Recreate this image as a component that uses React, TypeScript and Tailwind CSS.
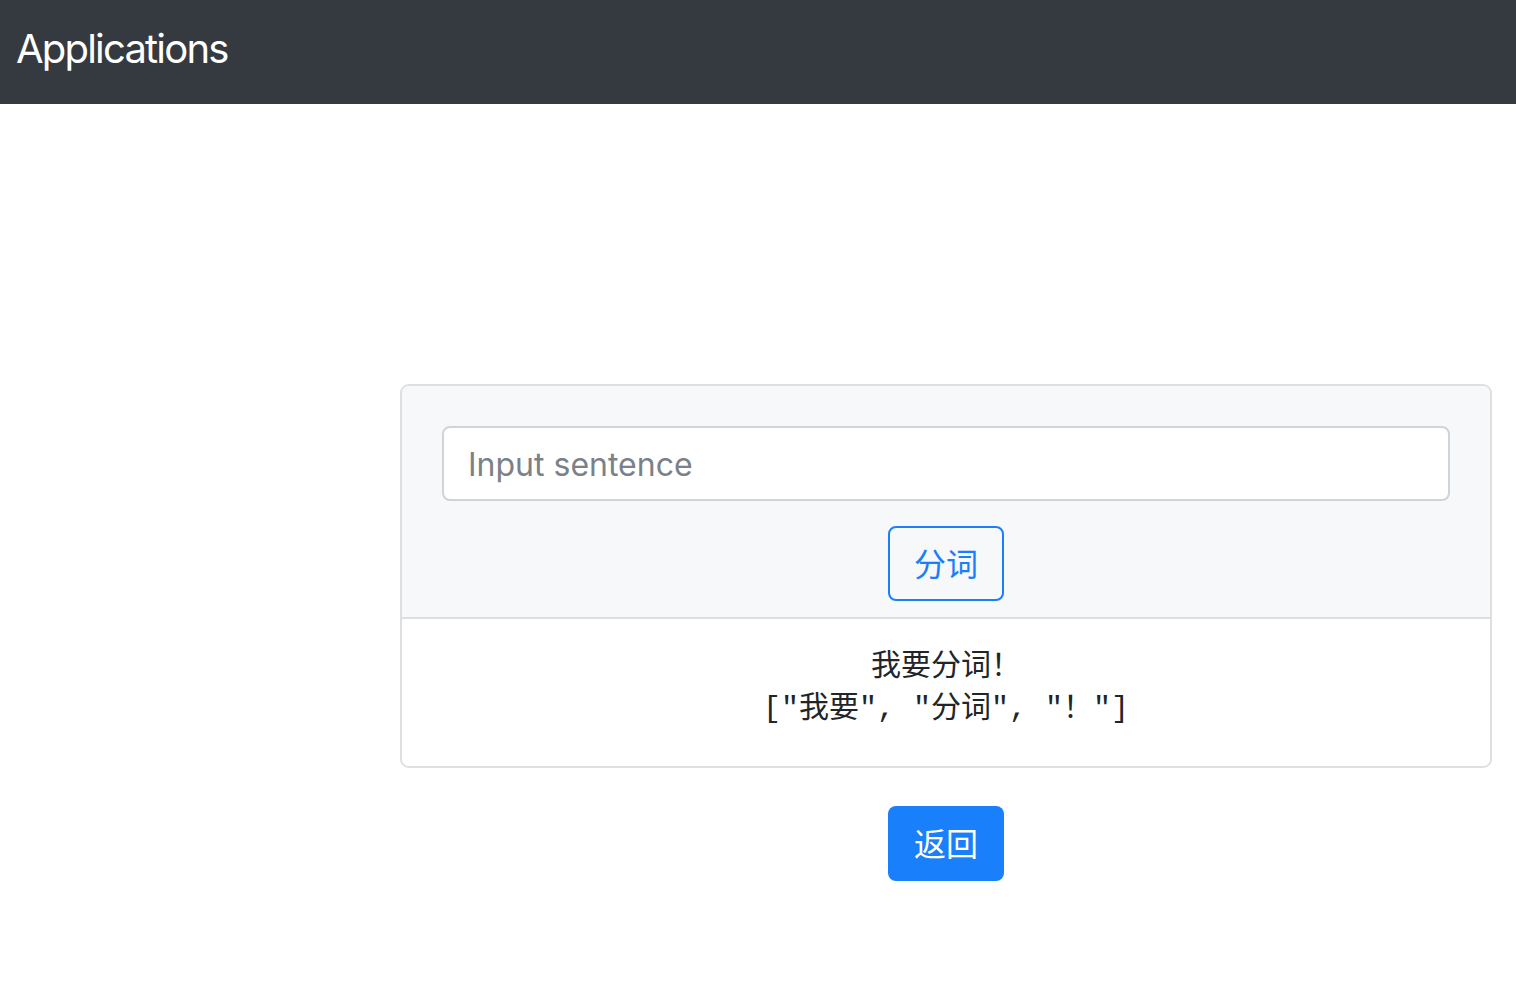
import { useState } from "react";

const sans = "font-['Inter','Noto_Sans_CJK_SC',sans-serif]";
const mono = "font-['Liberation_Mono','Noto_Sans_CJK_SC',monospace]";

const App = () => {
  const [sentence, setSentence] = useState<string>("");
  const source = "我要分词！";
  const tokens = ["我要", "分词", "！"];

  return (
    <div className={`min-h-[990px] bg-white text-[#212529] ${sans}`}>
      {/* Navbar */}
      <nav className="flex h-[104px] items-center bg-[#343a40] pb-[6px] pl-4">
        <span className="text-[40px] leading-none tracking-[-1.8px] text-white">
          Applications
        </span>
      </nav>

      <div className="ml-[400px] mt-[280px] flex w-[1092px] flex-col items-center">
        {/* Card */}
        <div className="w-full overflow-hidden rounded-[9px] border-2 border-[#dedfe0]">
          <div className="flex flex-col items-center border-b-2 border-[#dedfe0] bg-[#f7f8f9] px-[40px] pb-[16px] pt-[40px]">
            <input
              value={sentence}
              onChange={(e) => setSentence(e.target.value)}
              placeholder="Input sentence"
              className="h-[75px] w-full rounded-[8px] border-2 border-[#ced4da] bg-white px-6 pt-[2px] text-[32px] text-[#495057] outline-none placeholder:text-[#7a8189]"
            />
            <button className="mt-[25px] h-[75px] rounded-[8px] border-2 border-[#1a7ffa] px-6 pt-[2px] text-[32px] leading-none text-[#1a7ffa]">
              分词
            </button>
          </div>
          <div className="flex flex-col items-center bg-white pb-[35px] pt-[24px] text-[30px] leading-[43px]">
            <p>{source}</p>
            <p className={`${mono} pt-[2px]`}>
              {"[" + tokens.map((t) => `"${t}"`).join(", ") + "]"}
            </p>
          </div>
        </div>

        {/* Back */}
        <button className="mt-[38px] h-[75px] rounded-[8px] bg-[#1a7ffa] px-[26px] pt-[2px] text-[32px] leading-none text-white">
          返回
        </button>
      </div>
    </div>
  );
};

export default App;
